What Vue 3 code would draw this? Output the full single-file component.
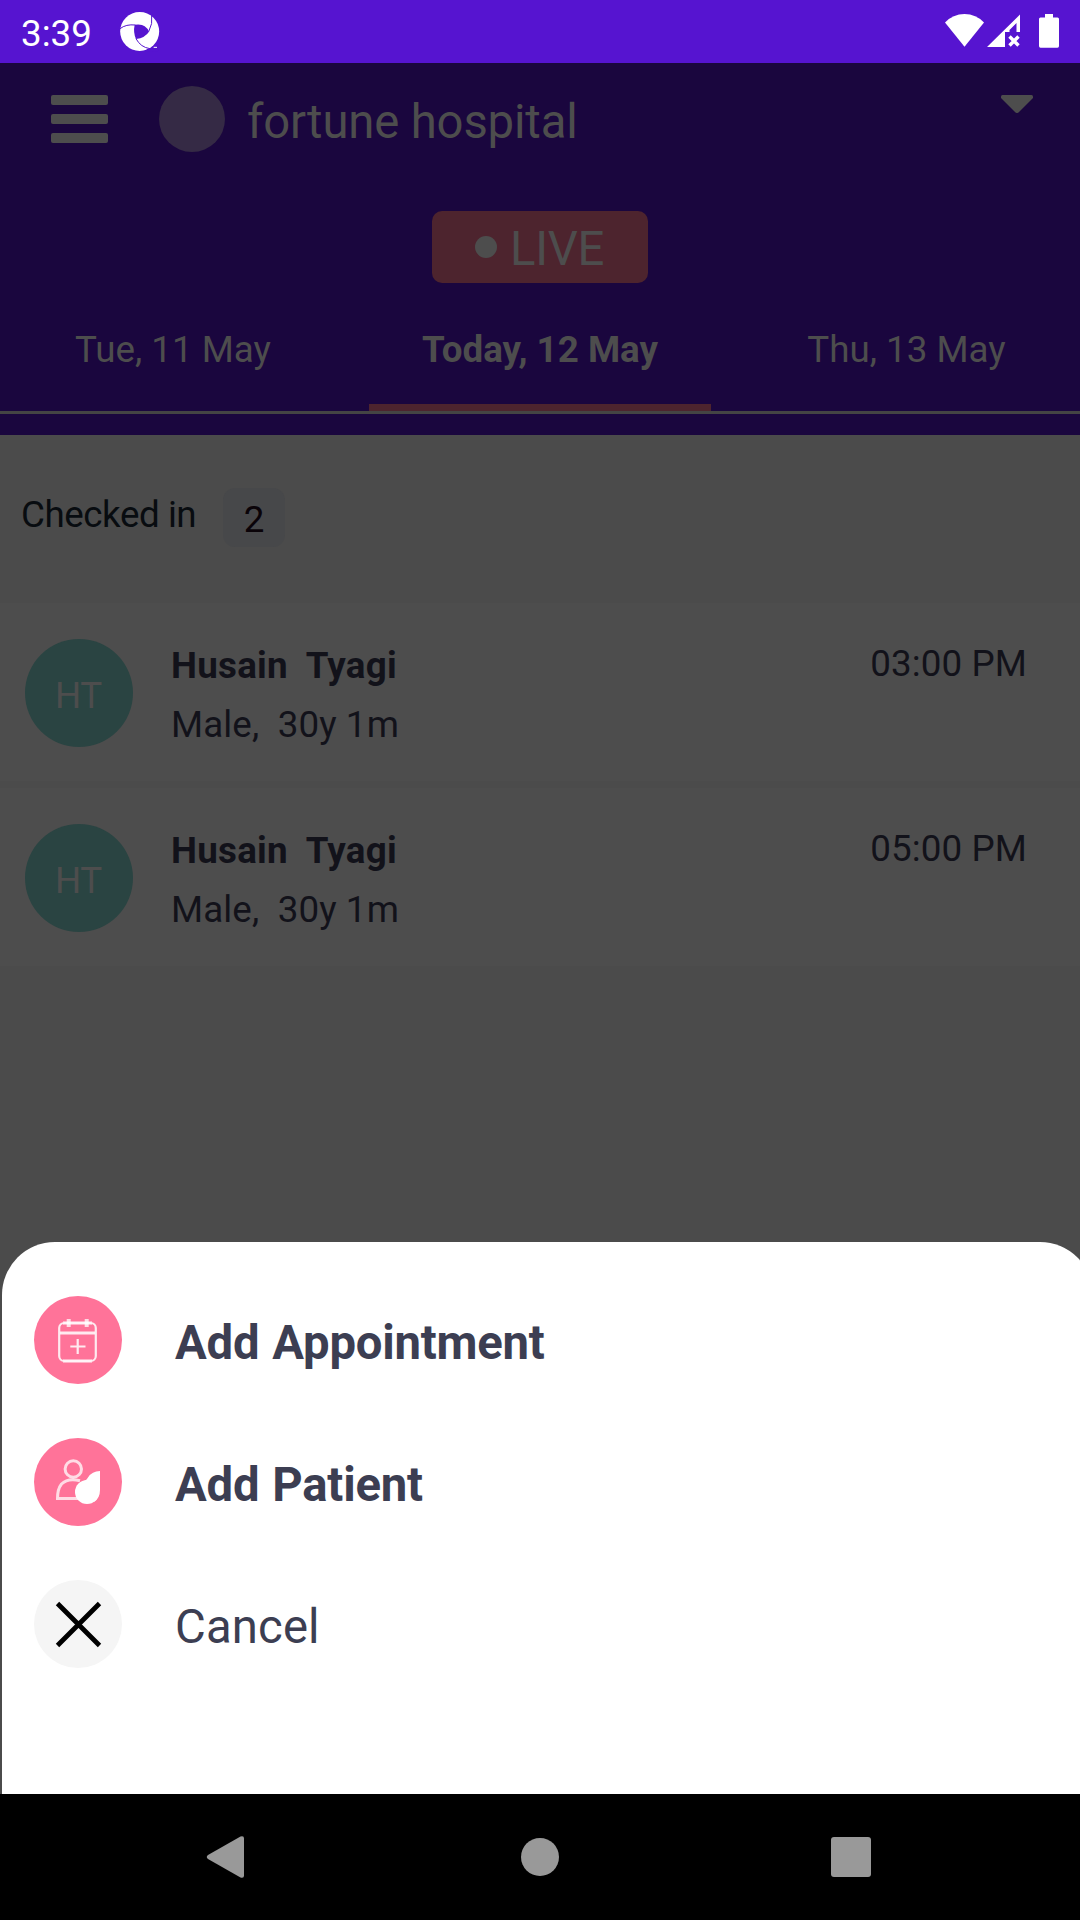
<script setup>
const tabs = [
  { label: 'Tue, 11 May', active: false },
  { label: 'Today, 12 May', active: true },
  { label: 'Thu, 13 May', active: false },
]

const patients = [
  { id: 1, initials: 'HT', name: 'Husain  Tyagi', info: 'Male,  30y 1m', time: '03:00 PM' },
  { id: 2, initials: 'HT', name: 'Husain  Tyagi', info: 'Male,  30y 1m', time: '05:00 PM' },
]
</script>

<template>
  <div class="screen">
    <div class="status-bar">
      <span class="clock">3:39</span>
      <svg class="app-mark" viewBox="360 36 120 120">
        <circle cx="419" cy="94.500" r="58.500" fill="#fff" />
        <path d="M404 74Q425 71 434 79Q444 86 447 95Q436 113 408 117Q399 97 404 74Z" fill="#5614d0" />
        <g fill="none" stroke="#5614d0" stroke-width="3">
          <path d="M360 86Q378 72 406 75" />
          <path d="M455 44Q459 72 446 95" />
          <path d="M408 116Q422 142 450 146" />
        </g>
        <path d="M437 154L441 147L460 145L476 139V156Z" fill="#5614d0" />
        <path d="M461 142H471" stroke="#fff" stroke-width="3" />
      </svg>
      <svg class="status-icons" viewBox="940 0 130 63">
        <path d="M945 22.500Q953 14 964.500 14Q976 14 984 22.500L964.500 46.700Z" fill="#fff" />
        <path d="M987 47L1020 14.500V32H1016.500V23L1009.500 30V32H1005V47Z" fill="#fff" />
        <path d="M1009.500 36.500L1018.500 45.500M1018.500 36.500L1009.500 45.500" stroke="#fff" stroke-width="3.400" />
        <path d="M1045 14H1053V17.500H1057.500Q1059 17.500 1059 19V46Q1059 47.700 1057.500 47.700H1040.500Q1039 47.700 1039 46V19Q1039 17.500 1040.500 17.500H1045Z" fill="#fff" />
      </svg>
    </div>

    <header class="header">
      <div class="title-row">
        <div class="burger"><i></i><i></i><i></i></div>
        <div class="logo"></div>
        <span class="title">fortune hospital</span>
        <svg class="caret" viewBox="0 0 32 18">
          <path d="M1.500 0H30.500Q32 0 32 1.500V3L17.500 17.500Q16 18.600 14.500 17.500L0 3V1.500Q0 0 1.500 0Z" fill="#4d4d4d" />
        </svg>
      </div>
      <div class="live"><i></i><span>LIVE</span></div>
      <nav class="tabs">
        <div v-for="tab in tabs" :key="tab.label" class="tab" :class="{ active: tab.active }">
          <span>{{ tab.label }}</span>
        </div>
      </nav>
    </header>

    <main class="content">
      <div class="section-head">
        <span class="section-label">Checked in</span>
        <span class="count">2</span>
      </div>
      <div v-for="p in patients" :key="p.id" class="patient">
        <div class="avatar"><span>{{ p.initials }}</span></div>
        <div class="details">
          <div class="name">{{ p.name }}</div>
          <div class="info">{{ p.info }}</div>
        </div>
        <div class="time">{{ p.time }}</div>
      </div>
    </main>

    <section class="sheet">
      <div class="action">
        <svg class="action-icon" viewBox="0 0 88 88">
          <circle cx="44" cy="44" r="44" fill="#ff7399" />
          <g fill="none" stroke="#fff" stroke-opacity=".85" stroke-width="2.200">
            <rect x="25.200" y="27" width="36.600" height="38" rx="5" />
            <path d="M26 37H61" stroke-width="2.800" />
            <path d="M43.700 43V58M36.300 50.500H51.500" />
          </g>
          <path d="M34.700 23V31M52.700 23V31" stroke="#fff" stroke-opacity=".75" stroke-width="4" />
          <path d="M29 27H58M29 65H58" stroke="#fff" stroke-opacity=".45" stroke-width="4" />
        </svg>
        <span class="action-label strong">Add Appointment</span>
      </div>
      <div class="action">
        <svg class="action-icon" viewBox="0 0 88 88">
          <circle cx="44" cy="44" r="44" fill="#ff7399" />
          <g fill="none" stroke="#fff" stroke-opacity=".75" stroke-width="3">
            <circle cx="39.300" cy="31" r="8.200" />
            <path d="M46 42.800Q34 39.500 27.500 46Q23.500 51 23.500 60.500H44" />
          </g>
          <circle cx="53" cy="54" r="12" fill="#fff" />
          <path d="M66 33V52Q66 60 60 64L46 45Q52 43 54 39.500Q58 33 66 33Z" fill="#fff" />
        </svg>
        <span class="action-label strong">Add Patient</span>
      </div>
      <div class="action">
        <svg class="action-icon" viewBox="0 0 88 88">
          <circle cx="44" cy="44" r="44" fill="#f5f5f5" />
          <path d="M23.500 23.500L65.500 65.500M65.500 23.500L23.500 65.500" stroke="#000" stroke-width="4.800" />
        </svg>
        <span class="action-label">Cancel</span>
      </div>
    </section>

    <footer class="nav-bar">
      <svg viewBox="0 0 1080 126">
        <path d="M208 61L240.500 42.600Q244 41.500 244 44.500V81.500Q244 84.500 240.500 83.400L208 65Q205.500 63 208 61Z" fill="#999" />
        <circle cx="540" cy="63" r="19" fill="#999" />
        <rect x="831" y="43" width="40" height="40" rx="3" fill="#999" />
      </svg>
    </footer>
  </div>
</template>

<style>
body {
  margin: 0;
}
</style>

<style scoped>
.screen {
  width: 1080px;
  height: 1920px;
  display: flex;
  flex-direction: column;
  overflow: hidden;
  background: #4b4b4b;
  font-family: Roboto, sans-serif;
  font-size: 36.75px;
  line-height: 60px;
  white-space: pre;
}
.status-bar {
  height: 63px;
  flex: none;
  display: flex;
  align-items: flex-start;
  background: #5614d0;
  color: #fff;
}
.clock {
  width: 99px;
  padding: 4px 0 0 21px;
}
.app-mark {
  width: 40px;
  height: 40px;
  margin-top: 12px;
}
.status-icons {
  width: 130px;
  height: 63px;
  margin-left: auto;
  margin-right: 10px;
}
.header {
  height: 372px;
  flex: none;
  display: flex;
  flex-direction: column;
  background: #1a063e;
  color: #4d4d4d;
}
.title-row {
  height: 148px;
  display: flex;
  align-items: flex-start;
}
.burger {
  width: 57px;
  margin: 32px 51px 0 51px;
  display: flex;
  flex-direction: column;
  gap: 9px;
}
.burger i {
  height: 10px;
  border-radius: 2px;
  background: #4d4d4d;
}
.logo {
  width: 66px;
  height: 66px;
  margin-top: 23px;
  border-radius: 50%;
  background: #352a45;
}
.title {
  margin: 29px 0 0 22px;
  font-size: 47.25px;
  letter-spacing: -0.15px;
}
.caret {
  width: 32px;
  height: 18px;
  margin: 32px 47px 0 auto;
}
.live {
  width: 216px;
  height: 72px;
  flex: none;
  align-self: center;
  display: flex;
  box-sizing: border-box;
  padding-left: 43px;
  border-radius: 10px;
  background: #4d242e;
  font-size: 47.25px;
  letter-spacing: -0.3px;
}
.live i {
  width: 22px;
  height: 22px;
  margin: 25px 13px 0 0;
  border-radius: 50%;
  background: #4d4d4d;
}
.live span {
  margin-top: 8px;
}
.tabs {
  height: 128px;
  flex: none;
  display: grid;
  grid-template-columns: 369px 342px 369px;
  border-bottom: 3px solid #444;
}
.tab {
  box-sizing: border-box;
  padding-top: 37px;
  text-align: center;
}
.tab:first-child {
  padding-right: 23px;
}
.tab:last-child {
  padding-left: 22px;
}
.tab.active {
  font-weight: 700;
  border-bottom: 7px solid #4d242e;
}
.content {
  height: 807px;
  flex: none;
}
.section-head {
  height: 168px;
  display: flex;
  align-items: flex-start;
  color: #080c10;
}
.section-label {
  width: 202px;
  padding: 50px 0 0 21px;
  letter-spacing: -0.45px;
}
.count {
  width: 62px;
  height: 59px;
  margin-top: 53px;
  line-height: 64px;
  border-radius: 12px;
  background: #47484a;
  color: #0a0308;
  text-align: center;
}
.patient {
  height: 178px;
  display: flex;
  align-items: flex-start;
  margin-bottom: 7px;
  background: #4d4d4d;
  color: #12121a;
}
.avatar {
  width: 108px;
  height: 108px;
  margin: 36px 0 0 25px;
  border-radius: 50%;
  background: #2a4442;
  color: #4d4d4d;
  text-align: center;
}
.avatar span {
  display: block;
  margin: 27px 1px 0 0;
  letter-spacing: -0.4px;
}
.details {
  margin: 33px 0 0 38px;
}
.name {
  height: 59px;
  font-weight: 700;
  letter-spacing: 0.25px;
}
.info {
  letter-spacing: 0.1px;
}
.time {
  margin: 31px 53px 0 auto;
  letter-spacing: 0.12px;
}
.sheet {
  width: 1091px;
  height: 552px;
  flex: none;
  box-sizing: border-box;
  margin-left: 2px;
  padding: 54px 0 0 32px;
  display: flex;
  flex-direction: column;
  gap: 54px;
  border-radius: 53px 53px 0 0;
  background: #fff;
  color: #3c3e52;
}
.action {
  display: flex;
  align-items: flex-start;
}
.action-icon {
  width: 88px;
  height: 88px;
  flex: none;
}
.action-label {
  margin: 17px 0 0 53px;
  font-size: 47.25px;
  letter-spacing: 0.15px;
}
.strong {
  font-weight: 700;
  letter-spacing: -0.22px;
  word-spacing: 1.5px;
}
.nav-bar {
  height: 126px;
  flex: none;
  background: #000;
}
.nav-bar svg {
  display: block;
  width: 1080px;
  height: 126px;
}
</style>
